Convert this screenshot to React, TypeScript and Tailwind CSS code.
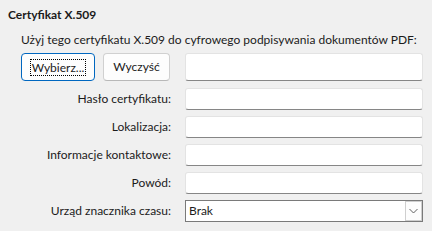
import React from "react";

const font = { fontFamily: 'Lato, "Noto Sans", sans-serif' };

function TextBox() {
  return (
    <div className="h-full w-full bg-white border border-[#e3e3e3] border-b-[#868686] rounded-[3px]" />
  );
}

function Row({ label, children }: { label: string; children?: React.ReactNode }) {
  return (
    <div className="grid grid-cols-[150px_238px] gap-x-[14px] h-[22px] items-center">
      <div className="text-right text-[12px] leading-[16px] text-[#1b1b1b]">{label}</div>
      <div className="h-full">{children ?? <TextBox />}</div>
    </div>
  );
}

export default function App() {
  return (
    <div className="w-[432px] h-[231px] bg-[#f0f0f0] pl-2 pt-[6px] overflow-hidden" style={font}>
      <div className="h-[18px] leading-[18px] text-[12px] font-bold text-[#1b1b1b]">Certyfikat X.509</div>
      <div className="pl-[13px]">
        <div className="mt-[8px] h-[16px] leading-[16px] text-[12px] text-[#1b1b1b] whitespace-nowrap">
          Użyj tego certyfikatu X.509 do cyfrowego podpisywania dokumentów PDF:
        </div>
        <div className="mt-[5px] flex flex-col gap-[6px]">
          <div className="grid grid-cols-[150px_238px] gap-x-[14px] h-[28px] mb-[1px]">
            <div className="flex gap-[8px]">
              <button className="w-[74px] h-[28px] bg-[#fdfdfd] border border-[#0067c0] rounded-[4px] flex items-center justify-center text-[12px] text-[#1b1b1b]">
                <span className="border border-dotted border-black px-[1px] leading-[15px]">Wybierz...</span>
              </button>
              <button className="w-[67px] h-[28px] bg-[#fdfdfd] border border-[#d0d0d0] border-b-[#b8b8b8] rounded-[4px] flex items-center justify-center text-[12px] text-[#1b1b1b]">
                Wyczyść
              </button>
            </div>
            <TextBox />
          </div>
          <Row label="Hasło certyfikatu:" />
          <Row label="Lokalizacja:" />
          <Row label="Informacje kontaktowe:" />
          <Row label="Powód:" />
          <Row label="Urząd znacznika czasu:">
            <div className="h-full w-full bg-white border border-[#7a7a7a] flex items-center justify-between">
              <span className="pl-[3px] text-[12px] leading-[16px] text-[#1b1b1b]">Brak</span>
              <div className="w-[17px] h-[20px] border border-[#cfcfcf] bg-[#fdfdfd] flex items-center justify-center">
                <svg width="9" height="6" viewBox="0 0 9 6">
                  <path d="M0.5 1 L4.5 5 L8.5 1" fill="none" stroke="#606060" strokeWidth="1" />
                </svg>
              </div>
            </div>
          </Row>
        </div>
      </div>
    </div>
  );
}
